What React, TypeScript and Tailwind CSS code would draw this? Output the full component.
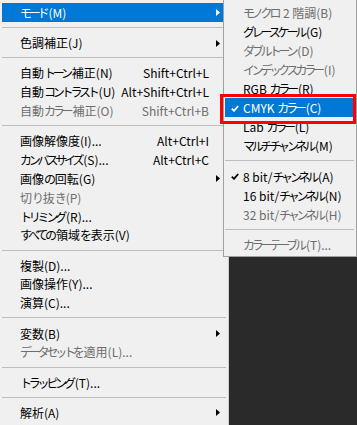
import React from "react";

type Item =
  | { sep: true }
  | {
      sep?: false;
      label: string;
      shortcut?: string;
      sub?: boolean;
      disabled?: boolean;
      active?: boolean;
      checked?: boolean;
    };

const mainItems: Item[] = [
  { label: "モード(M)", sub: true, active: true },
  { sep: true },
  { label: "色調補正(J)", sub: true },
  { sep: true },
  { label: "自動トーン補正(N)", shortcut: "Shift+Ctrl+L" },
  { label: "自動コントラスト(U)", shortcut: "Alt+Shift+Ctrl+L" },
  { label: "自動カラー補正(O)", shortcut: "Shift+Ctrl+B", disabled: true },
  { sep: true },
  { label: "画像解像度(I)...", shortcut: "Alt+Ctrl+I" },
  { label: "カンバスサイズ(S)...", shortcut: "Alt+Ctrl+C" },
  { label: "画像の回転(G)", sub: true },
  { label: "切り抜き(P)", disabled: true },
  { label: "トリミング(R)..." },
  { label: "すべての領域を表示(V)" },
  { sep: true },
  { label: "複製(D)..." },
  { label: "画像操作(Y)..." },
  { label: "演算(C)..." },
  { sep: true },
  { label: "変数(B)", sub: true },
  { label: "データセットを適用(L)...", disabled: true },
  { sep: true },
  { label: "トラッピング(T)..." },
  { sep: true },
  { label: "解析(A)", sub: true },
];

const subItems: Item[] = [
  { label: "モノクロ 2 階調(B)", disabled: true },
  { label: "グレースケール(G)" },
  { label: "ダブルトーン(D)", disabled: true },
  { label: "インデックスカラー(I)", disabled: true },
  { label: "RGB カラー(R)" },
  { label: "CMYK カラー(C)", checked: true, active: true },
  { label: "Lab カラー(L)" },
  { label: "マルチチャンネル(M)" },
  { sep: true },
  { label: "8 bit/チャンネル(A)", checked: true },
  { label: "16 bit/チャンネル(N)" },
  { label: "32 bit/チャンネル(H)", disabled: true },
  { sep: true },
  { label: "カラーテーブル(T)...", disabled: true },
];

// kana runs are narrow in the Windows UI font, squeeze them a bit
function Label({ text }: { text: string }) {
  const parts = text.split(/([\u3040-\u30ff]+)/).filter(Boolean);
  return (
    <span className="whitespace-pre">
      {parts.map((p, i) =>
        /[\u3040-\u30ff]/.test(p) ? (
          <span key={i} className="tracking-[-3.2px]">
            {p}
          </span>
        ) : (
          <span key={i} className={i > 0 ? "ml-[2px]" : ""}>
            {p}
          </span>
        )
      )}
    </span>
  );
}

function Arrow({ white }: { white?: boolean }) {
  return (
    <svg width="4" height="7" viewBox="0 0 4 7" className="shrink-0">
      <path d="M0 0 L4 3.5 L0 7 Z" fill={white ? "#fff" : "#000"} />
    </svg>
  );
}

function Check({ white }: { white?: boolean }) {
  return (
    <svg width="8" height="7" viewBox="0 0 8 7">
      <path
        d="M0.8 3.6 L3 5.8 L7.2 1"
        fill="none"
        stroke={white ? "#fff" : "#000"}
        strokeWidth="1.8"
      />
    </svg>
  );
}

export default function App() {
  return (
    <div className="relative w-[357px] h-[425px] overflow-hidden bg-[#2a2a2a] text-[12px] leading-none font-['Noto_Sans_CJK_JP',sans-serif]">
      {/* Main menu */}
      <div className="w-[229px] h-full bg-[#f0f0f0] border-r border-[#cfcfcf] pt-[3px]">
        {mainItems.map((it, i) =>
          it.sep ? (
            <div key={i} className="h-[11.5px] flex items-center px-[2px]">
              <div className="h-px w-full bg-[#bdbdbd]" />
            </div>
          ) : (
            <div
              key={i}
              className={`h-[18.8px] mx-[2px] flex items-center pl-[18px] pr-[6px] pt-[1px] ${
                it.active ? "bg-[#0078d7] text-white" : it.disabled ? "text-[#6d6d6d]" : "text-black"
              }`}
            >
              <span className="flex-1">
                <Label text={it.label} />
              </span>
              {it.shortcut && <span className="whitespace-nowrap mr-[11px]">{it.shortcut}</span>}
              {it.sub && <Arrow white={it.active} />}
            </div>
          )
        )}
      </div>

      {/* Submenu */}
      <div className="absolute left-[223px] top-[-1px] w-[134px] h-[258px] bg-[#f0f0f0] border border-[#a0a0a0] pt-[3px]">
        {subItems.map((it, i) =>
          it.sep ? (
            <div key={i} className="h-[11.5px] flex items-center pl-[1px] pr-[2px]">
              <div className="h-px w-full bg-[#bdbdbd]" />
            </div>
          ) : (
            <div
              key={i}
              className={`h-[19px] ml-[1px] mr-[2px] flex items-center pt-[1px] ${
                it.active ? "bg-[#0078d7] text-white" : it.disabled ? "text-[#6d6d6d]" : "text-black"
              }`}
            >
              <span className="w-[18px] pl-[6px] flex items-center">
                {it.checked && <Check white={it.active} />}
              </span>
              <Label text={it.label} />
            </div>
          )
        )}
      </div>

      {/* Red highlight frame */}
      <div className="absolute left-[220px] top-[94px] w-[136px] h-[30px] border-[3px] border-[#ff0000]" />
    </div>
  );
}
